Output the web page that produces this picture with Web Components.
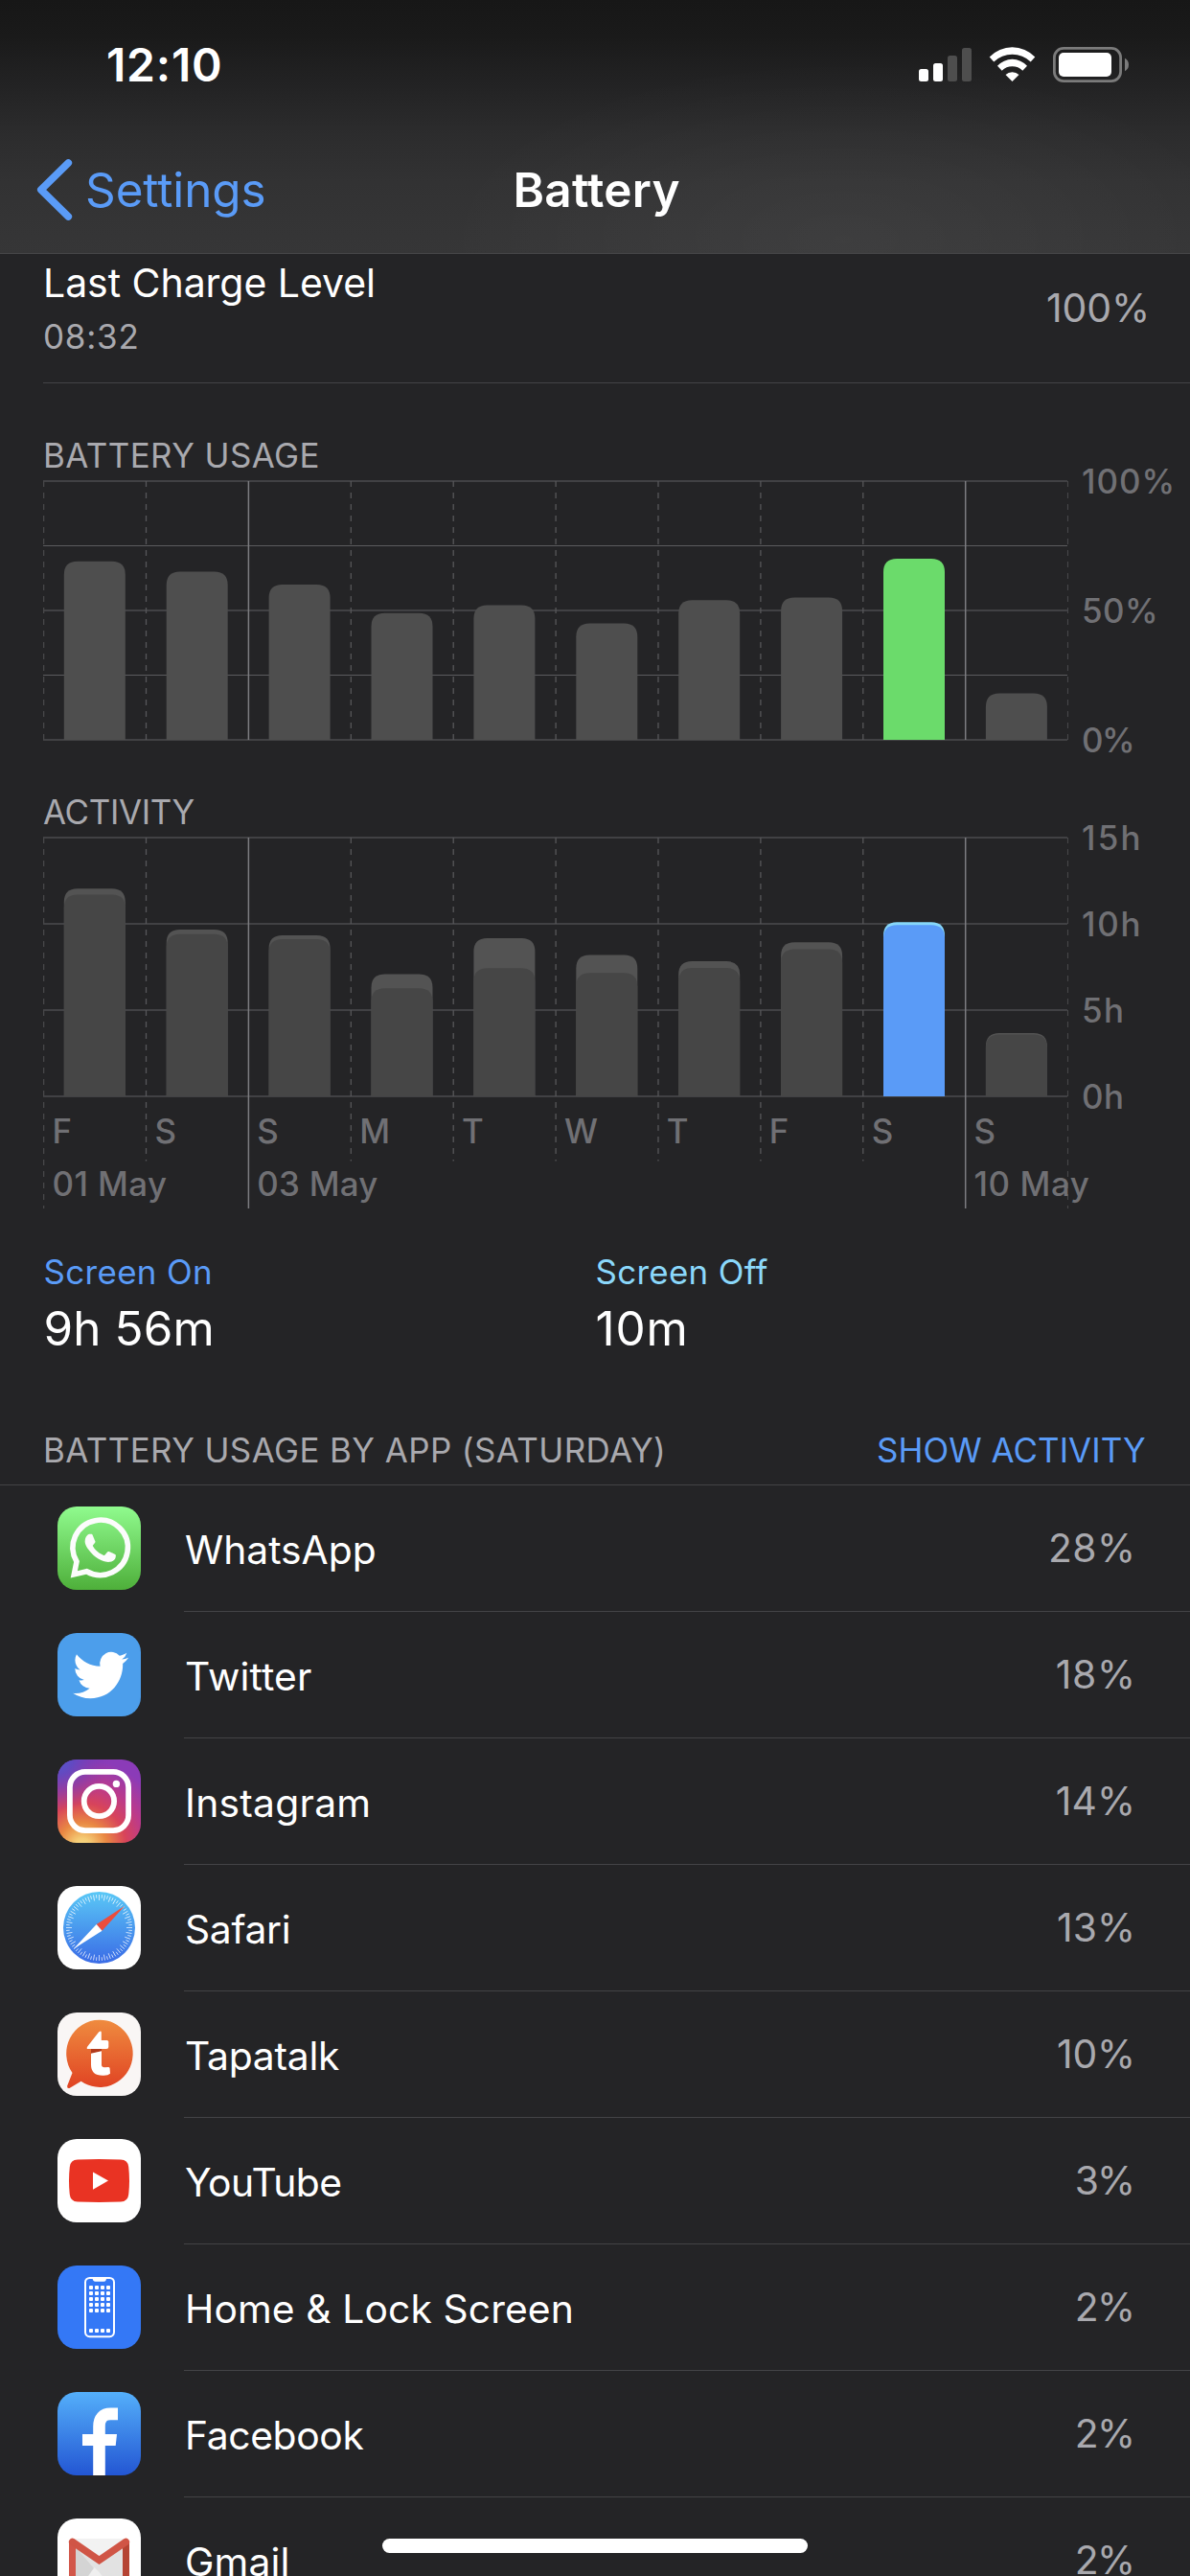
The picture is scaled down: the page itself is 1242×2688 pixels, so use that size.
<!DOCTYPE html>
<html lang="en">
<head>
<meta charset="utf-8">
<title>Battery</title>
<style>
    body {
        margin: 0;
        width: 1242px;
        height: 2688px;
        overflow: hidden;
        background: #242426;
        color: #fff;
        font-family: Inter, "Liberation Sans", sans-serif;
    }
</style>
</head>
<body>
<battery-screen></battery-screen>
<script>
const BLUE = '#5a9bf7';

// text whose tracking is adjusted so that its ink is `fit` pixels wide
window.customElements.define('fit-text', class FitText extends HTMLElement {
    static #ctx = document.createElement('canvas').getContext('2d');
    constructor() {
        super();
        this.attachShadow({ mode: 'open' });
        this.shadowRoot.innerHTML = `
            <style>
                :host { display: inline-block; white-space: pre; }
            </style>
            <slot></slot>
        `.replace(/\n\s*/g, '');
    }
    connectedCallback() {
        const fit = parseFloat(this.getAttribute('fit'));
        const text = this.textContent;
        const { fontWeight, fontSize, fontFamily } = getComputedStyle(this);
        const ctx = FitText.#ctx;
        ctx.font = `${fontWeight} ${fontSize} ${fontFamily}`;
        const m = ctx.measureText(text);
        const ink = m.actualBoundingBoxRight + m.actualBoundingBoxLeft;
        const spacing = fit && text.length > 1 ? (fit - ink) / (text.length - 1) : 0;
        this.style.letterSpacing = `${spacing.toFixed(3)}px`;
        this.style.marginRight = `${(m.actualBoundingBoxRight - m.width - spacing).toFixed(2)}px`;
    }
});

window.customElements.define('status-bar', class StatusBar extends HTMLElement {
    constructor() {
        super();
        this.attachShadow({ mode: 'open' });
        this.shadowRoot.innerHTML = `
            <style>
                :host {
                    display: flex;
                    justify-content: space-between;
                    box-sizing: border-box;
                    height: 132px;
                    padding: 38px 64px 0 111px;
                    font-size: 48px;
                    font-weight: 600;
                    line-height: 60px;
                }
                svg { display: block; margin-top: 10px; }
            </style>
            <slot></slot>
            <svg width="220" height="40" viewBox="957 48 220 40" fill="#fff">
                <rect x="958" y="72" width="10" height="13" rx="2.5"/>
                <rect x="973" y="66" width="10" height="19" rx="2.5"/>
                <g fill="#4e4e4e">
                    <rect x="988" y="58" width="10" height="27" rx="2.5"/>
                    <rect x="1003" y="50" width="10" height="35" rx="2.5"/>
                </g>
                <g transform="translate(1031.7 49)">
                    <path d="M0 10.4A33 33 0 0 1 47.6 10.4L43 15.4A27.8 27.8 0 0 0 4.6 15.4Z"/>
                    <path d="M8.3 19.7A21 21 0 0 1 39.3 19.7L34.6 24.7A15.5 15.5 0 0 0 13 24.7Z"/>
                    <path d="M16.8 29A10 10 0 0 1 30.8 29L23.8 36Z"/>
                </g>
                <rect x="1099.4" y="50.4" width="69.2" height="34.2" rx="9.6" fill="none" stroke="#7b7b7b" stroke-width="2.8"/>
                <rect x="1104" y="55" width="55" height="25" rx="5"/>
                <path d="M1173 60.7Q1177 63 1177 67.5T1173 74.3Z" fill="#7b7b7b"/>
            </svg>
        `;
    }
});

window.customElements.define('nav-bar', class NavBar extends HTMLElement {
    constructor() {
        super();
        this.attachShadow({ mode: 'open' });
        this.shadowRoot.innerHTML = `
            <style>
                :host {
                    display: grid;
                    grid-template-columns: 1fr auto 1fr;
                    height: 132px;
                    font-size: 49.4px;
                    line-height: 132px;
                }
                .back {
                    display: flex;
                    align-items: center;
                    gap: 13px;
                    padding-left: 37px;
                    color: ${BLUE};
                }
                .title { padding-left: 3px; font-weight: 600; }
            </style>
            <div class="back">
                <svg width="39" height="66" viewBox="0 0 39 66" fill="none" stroke="currentColor" stroke-width="7.6" stroke-linecap="round" stroke-linejoin="round">
                    <path d="M34.3 5L5.8 33L34.3 61"/>
                </svg>
                <slot name="back"></slot>
            </div>
            <div class="title"><slot></slot></div>
        `;
    }
});

window.customElements.define('charge-row', class ChargeRow extends HTMLElement {
    constructor() {
        super();
        this.attachShadow({ mode: 'open' });
        this.shadowRoot.innerHTML = `
            <style>
                :host {
                    display: flex;
                    justify-content: space-between;
                    box-sizing: border-box;
                    height: 135px;
                    margin-left: 45px;
                    padding: 2px 46px 0 0;
                    border-bottom: 1px solid #434346;
                    font-size: 41px;
                    line-height: 56px;
                }
                .sub { color: #a9a9ae; font-size: 35px; }
                .value { margin-top: 26px; color: #a9a9ae; }
            </style>
            <div>
                <div><slot name="label"></slot></div>
                <div class="sub"><slot name="time"></slot></div>
            </div>
            <div class="value"><slot name="value"></slot></div>
        `;
    }
});

window.customElements.define('day-chart', class DayChart extends HTMLElement {
    static #step = 106.9
    static #height = 270
    static #style = `
        :host {
            display: grid;
            grid-template-columns: 1070px 1fr;
            padding-left: 45px;
            font-size: 34.9px;
        }
        .title {
            grid-column: 1 / 3;
            height: 51px;
            line-height: 51px;
            color: #a9a9ae;
        }
        svg { display: block; grid-area: 2 / 1; }
        .axis {
            grid-area: 2 / 2;
            display: flex;
            flex-direction: column;
            justify-content: space-between;
            height: 310px;
            margin: -19px 0 -19px 14px;
            line-height: 40px;
            font-weight: 500;
            color: #707074;
        }
        .labels {
            grid-area: 2 / 1;
            align-self: end;
            display: grid;
            grid-template-columns: repeat(10, 106.9px);
            grid-template-rows: 55px 55px;
            height: 109px;
            padding-left: 9.5px;
            line-height: 55px;
            font-weight: 500;
            color: #707074;
        }
        .date { grid-row: 2; white-space: nowrap; }
    `
    constructor() {
        super();
        this.attachShadow({ mode: 'open' });
    }
    connectedCallback() {
        const { max, lines, values, inner = '', ticks, days, dates = '[]', active, colors } = this.dataset;
        const labels = JSON.parse(ticks);
        this.shadowRoot.innerHTML = `
            <style>${DayChart.#style}</style>
            <div class="title"><slot></slot></div>
            ${this.#draw(+max, +lines, values.split(' '), inner ? inner.split(' ') : [], +active, colors.split(' '), !!days)}
            <div class="axis">
                ${labels.map(([text, fit]) => `<div><fit-text fit="${fit}">${text}</fit-text></div>`).join('')}
            </div>
            ${days ? this.#labels(days.split(' '), JSON.parse(dates)) : ''}
        `;
    }
    #labels(days, dates) {
        return `<div class="labels">
            ${days.map((day) => `<div class="day">${day}</div>`).join('')}
            ${dates.map(([col, text, fit]) => `<div class="date" style="grid-column: ${col}"><fit-text fit="${fit}">${text}</fit-text></div>`).join('')}
        </div>`;
    }
    #bar(i, value, max, fill) {
        const h = value / max * DayChart.#height;
        const x = (21.8 + i * DayChart.#step).toFixed(1);
        const y = (1 + DayChart.#height - h).toFixed(1);
        return `<path d="M${x} ${DayChart.#height + 1}V${(+y + 14).toFixed(1)}q0 -14 14 -14h36q14 0 14 14V${DayChart.#height + 1}Z" fill="${fill}"/>`;
    }
    #draw(max, lines, values, inner, active, [on, top, off, offTop], tall) {
        const height = DayChart.#height;
        const total = tall ? 389 : 272;
        let out = '';
        for (let i = 0; i <= lines; i++) {
            const y = i * height / lines;
            // quarter lines fall on one device pixel, the others cover two
            out += y % 1 ? `<path d="M0 ${Math.floor(y) + 1.5}H1069" stroke="#5b5b5e"/>`
                : `<path d="M0 ${y + 1}H1069" stroke="#414144" stroke-width="2"/>`;
        }
        for (let i = 0; i <= 10; i++) {
            const x = (0.6 + i * DayChart.#step).toFixed(1);
            const edge = i === 0 || i === 10;
            const solid = i === 2 || i === 9;
            const end = tall ? (edge || solid ? 388 : 338.5) : 271;
            out += solid ? `<path d="M${x} 1V${end}" stroke="#7c7c80" stroke-width="1.5"/>`
                : `<path d="M${x} 1V${end}" stroke="${edge ? '#48484a' : '#57575a'}" stroke-width="1.3" stroke-dasharray="6 6"/>`;
        }
        values.forEach((value, i) => {
            out += this.#bar(i, value, max, inner.length ? (i === active ? top : offTop) : (i === active ? on : off));
            if (inner.length) {
                out += this.#bar(i, inner[i], max, i === active ? on : off);
            }
        });
        return `<svg width="1070" height="${total}" viewBox="0 0 1070 ${total}" fill="none">${out}</svg>`;
    }
});

window.customElements.define('usage-stat', class UsageStat extends HTMLElement {
    constructor() {
        super();
        this.attachShadow({ mode: 'open' });
        this.shadowRoot.innerHTML = `
            <style>
                :host { display: block; }
                .name { font-size: 34.9px; line-height: 50px; color: var(--tint); }
                .value { margin-top: 4px; font-size: 49.4px; line-height: 60px; }
            </style>
            <div class="name"><slot name="name"></slot></div>
            <div class="value"><slot></slot></div>
        `;
    }
});

window.customElements.define('app-icon', class AppIcon extends HTMLElement {
    static #gradient(from, to) {
        return `<linearGradient id="g" x2="0" y2="1"><stop stop-color="${from}"/><stop offset="1" stop-color="${to}"/></linearGradient>`;
    }
    static #ticks() {
        let out = '';
        for (let i = 0; i < 72; i++) {
            out += `<path d="M43.5 9V${i % 2 ? 12.6 : 15}" transform="rotate(${i * 5} 43.5 43.5)"/>`;
        }
        return out;
    }
    static #dots() {
        let out = '';
        for (const y of [21, 27, 33, 39, 45, 66]) {
            for (const x of [33, 39, 45, 51]) {
                out += `<rect x="${x}" y="${y}" width="4" height="4" rx="1"/>`;
            }
        }
        return out;
    }
    static #art = {
        whatsapp: () => `
            <defs>${AppIcon.#gradient('#90fb8e', '#4eaf3a')}</defs>
            <rect width="87" height="87" fill="url(#g)"/>
            <path d="M20 57.5A28.7 28.7 0 1 1 30.5 67.8L17.3 70.9Z" fill="none" stroke="#fcfcfc" stroke-width="5.6"/>
            <path transform="translate(12.6 12.2) scale(2.67 2.6)" fill="#fcfcfc" d="M17.472 14.382c-.297-.149-1.758-.867-2.03-.967-.273-.099-.471-.148-.67.15-.197.297-.767.966-.94 1.164-.173.199-.347.223-.644.075-.297-.15-1.255-.463-2.39-1.475-.883-.788-1.48-1.761-1.653-2.059-.173-.297-.018-.458.13-.606.134-.133.298-.347.446-.52.149-.174.198-.298.298-.497.099-.198.05-.371-.025-.52-.075-.149-.669-1.612-.916-2.207-.242-.579-.487-.5-.669-.51-.173-.008-.371-.01-.57-.01-.198 0-.52.074-.792.372-.272.297-1.04 1.016-1.04 2.479 0 1.462 1.065 2.875 1.213 3.074.149.198 2.096 3.2 5.077 4.487.709.306 1.262.489 1.694.625.712.227 1.36.195 1.871.118.571-.085 1.758-.719 2.006-1.413.248-.694.248-1.289.173-1.413-.074-.124-.272-.198-.57-.347z"/>`,
        twitter: () => `
            <rect width="87" height="87" fill="#4c9eeb"/>
            <path transform="translate(16 14.3) scale(2.42 2.48)" fill="#fff" d="M23.953 4.57a10 10 0 01-2.825.775 4.958 4.958 0 002.163-2.723c-.951.555-2.005.959-3.127 1.184a4.92 4.92 0 00-8.384 4.482C7.69 8.095 4.067 6.13 1.64 3.162a4.822 4.822 0 00-.666 2.475c0 1.71.87 3.213 2.188 4.096a4.904 4.904 0 01-2.228-.616v.06a4.923 4.923 0 003.946 4.827 4.996 4.996 0 01-2.212.085 4.936 4.936 0 004.604 3.417 9.867 9.867 0 01-6.102 2.105c-.39 0-.779-.023-1.17-.067a13.995 13.995 0 007.557 2.209c9.053 0 13.998-7.496 13.998-13.985 0-.21 0-.42-.015-.63A9.935 9.935 0 0024 4.59z"/>`,
        instagram: () => `
            <defs>
                <radialGradient id="warm" cx=".3" cy="1.05" r="1.05">
                    <stop stop-color="#f9de8a"/><stop offset=".1" stop-color="#f5cb74"/><stop offset=".28" stop-color="#e98843"/>
                    <stop offset=".5" stop-color="#d8445a"/><stop offset=".72" stop-color="#bb3a8c"/><stop offset="1" stop-color="#8b3bb8"/>
                </radialGradient>
                <radialGradient id="cool" cx="0" cy="0" r=".62">
                    <stop stop-color="#4f5bd0"/><stop offset=".3" stop-color="#5a4bc4" stop-opacity=".85"/><stop offset="1" stop-color="#7a35b0" stop-opacity="0"/>
                </radialGradient>
            </defs>
            <rect width="87" height="87" fill="url(#warm)"/>
            <rect width="87" height="87" fill="url(#cool)"/>
            <g fill="none" stroke="#fff" stroke-width="5.8">
                <rect x="12.9" y="12.9" width="61.2" height="61.2" rx="16"/>
                <circle cx="43.4" cy="43.5" r="15.7"/>
            </g>
            <circle cx="61.4" cy="25.4" r="3.7" fill="#fff"/>`,
        safari: () => `
            <defs>${AppIcon.#gradient('#5ac8f6', '#3a6be6')}</defs>
            <rect width="87" height="87" fill="#fff"/>
            <circle cx="43.5" cy="43.5" r="37.5" fill="url(#g)"/>
            <g stroke="#fff" stroke-opacity=".85" stroke-width=".8">${AppIcon.#ticks()}</g>
            <path d="M70.2 20.8L46.5 46.7L40.7 40Z" fill="#eb4d3d"/>
            <path d="M16.6 65.8L40.7 40L46.5 46.7Z" fill="#fff"/>`,
        tapatalk: () => `
            <defs>${AppIcon.#gradient('#ef8b3f', '#e04323')}</defs>
            <rect width="87" height="87" fill="#f9f6f5"/>
            <path d="M43.5 7.7A34.5 35.1 0 1 1 24.6 71.7L12.5 79Q9.8 79.5 10.2 76.5L15.5 63A34.5 35.1 0 0 1 43.5 7.7Z" fill="url(#g)"/>
            <path d="M35 38H46V40.5L35 43Z" fill="#b23a1c"/>
            <path d="M43 20.6Q45.8 18.4 45.8 21V28.9H51.5Q53.3 28.9 53.3 30.6V36Q53.3 38 51 38H32.2Q29.6 38 31.3 35.4Z" fill="#fff"/>
            <path d="M35 42.8L46 40.2V54.5Q46 57.3 49 57.3L53 56.9Q54.4 56.9 54.6 58.3L55 63.8Q53 65.7 48.4 65.7Q35 66.3 35 54.5Z" fill="#fff"/>`,
        youtube: () => `
            <rect width="87" height="87" fill="#fff"/>
            <path d="M21 21.4Q43.5 20.5 66 21.4Q73.5 21.7 74.2 29Q75.8 43.5 74.2 58Q73.5 65.2 66 65.6Q43.5 66.5 21 65.6Q13.5 65.2 12.8 58Q11.2 43.5 12.8 29Q13.5 21.7 21 21.4Z" fill="#e93323"/>
            <path d="M37 34.4V52.7L53 43.5Z" fill="#fff"/>`,
        home: () => `
            <rect width="87" height="87" fill="#3478f6"/>
            <g fill="#fff">
                <rect x="29" y="12.9" width="30" height="61.3" rx="4.6" fill="none" stroke="#fff" stroke-width="2"/>
                <path d="M36.5 12.5H51Q51 16.8 48.5 16.8H39.5Q36.8 16.8 36.5 12.5Z"/>
                ${AppIcon.#dots()}
            </g>`,
        facebook: () => `
            <defs>${AppIcon.#gradient('#54affa', '#2356d3')}</defs>
            <rect width="87" height="87" fill="url(#g)"/>
            <path d="M43.5 87V36Q43.5 22.9 55.5 22.9H63" fill="none" stroke="#fff" stroke-width="12.6"/>
            <path d="M26 44H62L60.7 56H26Z" fill="#fff"/>`,
        gmail: () => `
            <rect width="87" height="87" fill="#fff"/>
            <rect x="15" y="21" width="57" height="66" fill="#e2e2e2"/>
            <path d="M19 30L50 66H19Z" fill="#d4d4d4"/>
            <path d="M15 84L38.5 51L43.5 56L66 84Z" fill="#efefef"/>
            <path d="M15 21H72L43.5 41Z" fill="#f2f2f2"/>
            <path d="M12 24H19V87H12Z" fill="#d2574a"/>
            <path d="M68 24H75V87H68Z" fill="#b54434"/>
            <path d="M15.6 24.4L43.5 43.6L71.4 24.4" fill="none" stroke="#d05546" stroke-width="7.4" stroke-linecap="round"/>`,
    }
    constructor() {
        super();
        this.attachShadow({ mode: 'open' });
    }
    connectedCallback() {
        this.shadowRoot.innerHTML = `
            <style>
                :host {
                    display: block;
                    width: 87px;
                    height: 87px;
                    border-radius: 20px;
                    overflow: hidden;
                }
                svg { display: block; }
            </style>
            <svg width="87" height="87" viewBox="0 0 87 87">${AppIcon.#art[this.getAttribute('name')]()}</svg>
        `;
    }
});

window.customElements.define('app-row', class AppRow extends HTMLElement {
    constructor() {
        super();
        this.attachShadow({ mode: 'open' });
        this.shadowRoot.innerHTML = `
            <style>
                :host {
                    display: flex;
                    height: 132px;
                    padding-left: 60px;
                    font-size: 40.8px;
                }
                ::slotted(app-icon) { margin: 22px 45px 0 0; }
                .body {
                    flex: 1;
                    display: flex;
                    justify-content: space-between;
                    box-sizing: border-box;
                    padding-right: 61px;
                    border-bottom: 1px solid #434346;
                    line-height: 131px;
                }
                .name { padding: 2px 0 0 1px; }
                .value { color: #a9a9ae; }
            </style>
            <slot name="icon"></slot>
            <div class="body">
                <div class="name"><slot></slot></div>
                <div class="value"><slot name="value"></slot></div>
            </div>
        `;
    }
});

window.customElements.define('battery-screen', class BatteryScreen extends HTMLElement {
    static #apps = [
        ['whatsapp', 'WhatsApp', 196.7, '28%', 84],
        ['twitter', 'Twitter', 131, '18%', 78.3],
        ['instagram', 'Instagram', 188.3, '14%', 78.3],
        ['safari', 'Safari', 106.7, '13%', 77],
        ['tapatalk', 'Tapatalk', 160, '10%', 77],
        ['youtube', 'YouTube', 161.3, '3%', 57.3],
        ['home', 'Home &amp; Lock Screen', 399.7, '2%', 56.3],
        ['facebook', 'Facebook', 183.4, '2%', 56.3],
        ['gmail', 'Gmail', 104.4, '2%', 56.3],
    ]
    constructor() {
        super();
        this.attachShadow({ mode: 'open' });
        const rows = BatteryScreen.#apps.map(([icon, name, fit, value, valueFit]) => `
            <app-row>
                <app-icon slot="icon" name="${icon}"></app-icon>
                <fit-text fit="${fit}">${name}</fit-text>
                <fit-text slot="value" fit="${valueFit}">${value}</fit-text>
            </app-row>
        `).join('');
        this.shadowRoot.innerHTML = `
            <style>
                :host {
                    position: relative;
                    display: block;
                    height: 2688px;
                    overflow: hidden;
                }
                header {
                    border-bottom: 1px solid #464648;
                    background:
                        radial-gradient(420px 190px at 880px 250px, rgba(255, 255, 255, .045), transparent),
                        linear-gradient(#171717, #1a1a1a 38px, #222223 85px, #2c2c2d 140px, #323233 190px, #363637 264px);
                }
                .usage { margin-top: 50px; }
                .activity { margin-top: 49px; }
                .stats {
                    display: grid;
                    grid-template-columns: 576px 1fr;
                    margin: 40px 0 0 45.5px;
                }
                .heading {
                    display: flex;
                    justify-content: space-between;
                    margin-top: 62px;
                    padding: 0 47px 0 45px;
                    border-bottom: 1px solid #434346;
                    font-size: 34.9px;
                    line-height: 71px;
                    color: #a9a9ae;
                }
                .heading fit-text:last-child { color: ${BLUE}; }
                .home-indicator {
                    position: absolute;
                    left: 399px;
                    bottom: 24px;
                    width: 444px;
                    height: 15px;
                    border-radius: 8px;
                    background: #fff;
                }
            </style>
            <header>
                <status-bar><fit-text fit="117">12:10</fit-text></status-bar>
                <nav-bar>
                    <fit-text slot="back" fit="184.6">Settings</fit-text>
                    <fit-text fit="171">Battery</fit-text>
                </nav-bar>
            </header>
            <charge-row>
                <fit-text slot="label" fit="341">Last Charge Level</fit-text>
                <fit-text slot="time" fit="95.5">08:32</fit-text>
                <fit-text slot="value" fit="103">100%</fit-text>
            </charge-row>
            <day-chart class="usage" data-max="100" data-lines="4" data-active="8"
                data-values="69 65 60 49 52 45 54 55 70 18"
                data-ticks='[["100%", 92.4], ["50%", 74], ["0%", 51]]'
                data-colors="#6bdb6b #6bdb6b #4e4e4e #4e4e4e">
                <fit-text fit="283.5">BATTERY USAGE</fit-text>
            </day-chart>
            <day-chart class="activity" data-max="15" data-lines="3" data-active="8"
                data-values="12.04 9.67 9.33 7.09 9.17 8.2 7.83 8.93 10.1 3.67"
                data-inner="11.7 9.4 9.11 6.26 7.43 7.15 7.44 8.52 9.93 3.59"
                data-ticks='[["15h", 58.5], ["10h", 58.5], ["5h", 40], ["0h", 41]]'
                data-days="F S S M T W T F S S"
                data-dates='[[1, "01 May", 118.5], [3, "03 May", 125], [10, "10 May", 119.3]]'
                data-colors="${BLUE} #86d7f9 #464646 #535353">
                <fit-text fit="157.6">ACTIVITY</fit-text>
            </day-chart>
            <div class="stats">
                <usage-stat style="--tint: ${BLUE}">
                    <fit-text slot="name" fit="172.5">Screen On</fit-text>
                    <fit-text fit="173">9h 56m</fit-text>
                </usage-stat>
                <usage-stat style="--tint: #8bd8fb">
                    <fit-text slot="name" fit="179">Screen Off</fit-text>
                    <fit-text fit="91">10m</fit-text>
                </usage-stat>
            </div>
            <div class="heading">
                <fit-text fit="644">BATTERY USAGE BY APP (SATURDAY)</fit-text>
                <fit-text fit="279">SHOW ACTIVITY</fit-text>
            </div>
            ${rows}
            <div class="home-indicator"></div>
        `;
    }
});
</script>
</body>
</html>
